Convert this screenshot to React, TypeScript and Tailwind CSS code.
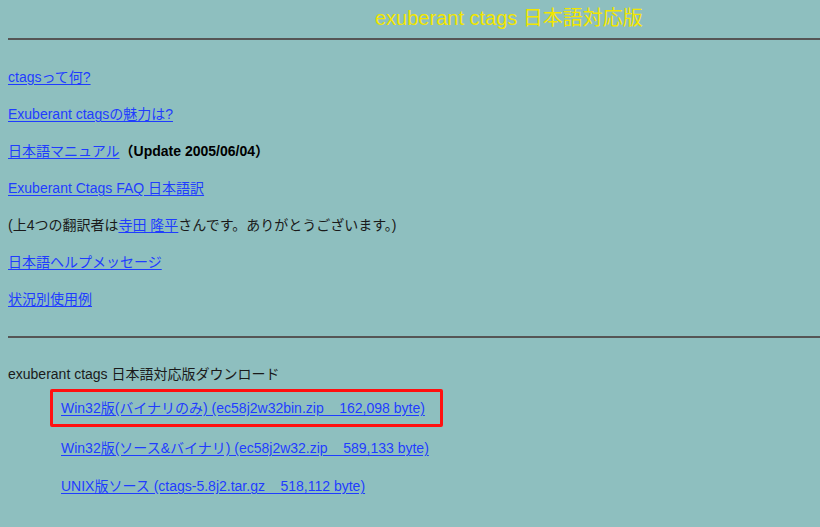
export default function App() {
  const link = "text-[#1f3cff] underline underline-offset-2";
  return (
    <div className="min-h-[527px] w-[820px] overflow-hidden bg-[#8ebfbf] font-['Liberation_Sans','Noto_Sans_CJK_JP',sans-serif] text-[14px] leading-[20px] text-[#1a1a1a]">
      <div className="pl-[375px] pt-[6px] h-[32px] text-[20px] leading-[24px] text-[#f2e600]">
        exuberant ctags 日本語対応版
      </div>
      <hr className="ml-[8px] mt-[6px] border-t-2 border-[#555]" />
      <div className="flex flex-col gap-[17px] pl-[8px] pt-[27px]">
        <a className={link}>ctagsって何?</a>
        <a className={link}>Exuberant ctagsの魅力は?</a>
        <div>
          <a className={link}>日本語マニュアル</a>
          <b className="text-black">（Update 2005/06/04）</b>
        </div>
        <a className={link}>Exuberant Ctags FAQ 日本語訳</a>
        <div>
          (上4つの翻訳者は<a className={link}>寺田 隆平</a>さんです。ありがとうございます。)
        </div>
        <a className={link}>日本語ヘルプメッセージ</a>
        <a className={link}>状況別使用例</a>
      </div>
      <hr className="ml-[8px] mt-[27px] border-t-2 border-[#555]" />
      <div className="pl-[8px] pt-[26px]">exuberant ctags 日本語対応版ダウンロード</div>
      <div className="flex flex-col items-start pl-[50px] pt-[5px]">
        <div className="w-[393px] h-[38px] rounded-[2px] border-[3px] border-[#ff1010] pl-[8px] flex items-center">
          <a className={link}>Win32版(バイナリのみ) (ec58j2w32bin.zip&nbsp;&nbsp;&nbsp;&nbsp;162,098 byte)</a>
        </div>
        <div className="flex flex-col gap-[18px] pl-[11px] pt-[11px]">
          <a className={link}>Win32版(ソース&amp;バイナリ) (ec58j2w32.zip&nbsp;&nbsp;&nbsp;&nbsp;589,133 byte)</a>
          <a className={link}>UNIX版ソース (ctags-5.8j2.tar.gz&nbsp;&nbsp;&nbsp;&nbsp;518,112 byte)</a>
        </div>
      </div>
    </div>
  );
}
